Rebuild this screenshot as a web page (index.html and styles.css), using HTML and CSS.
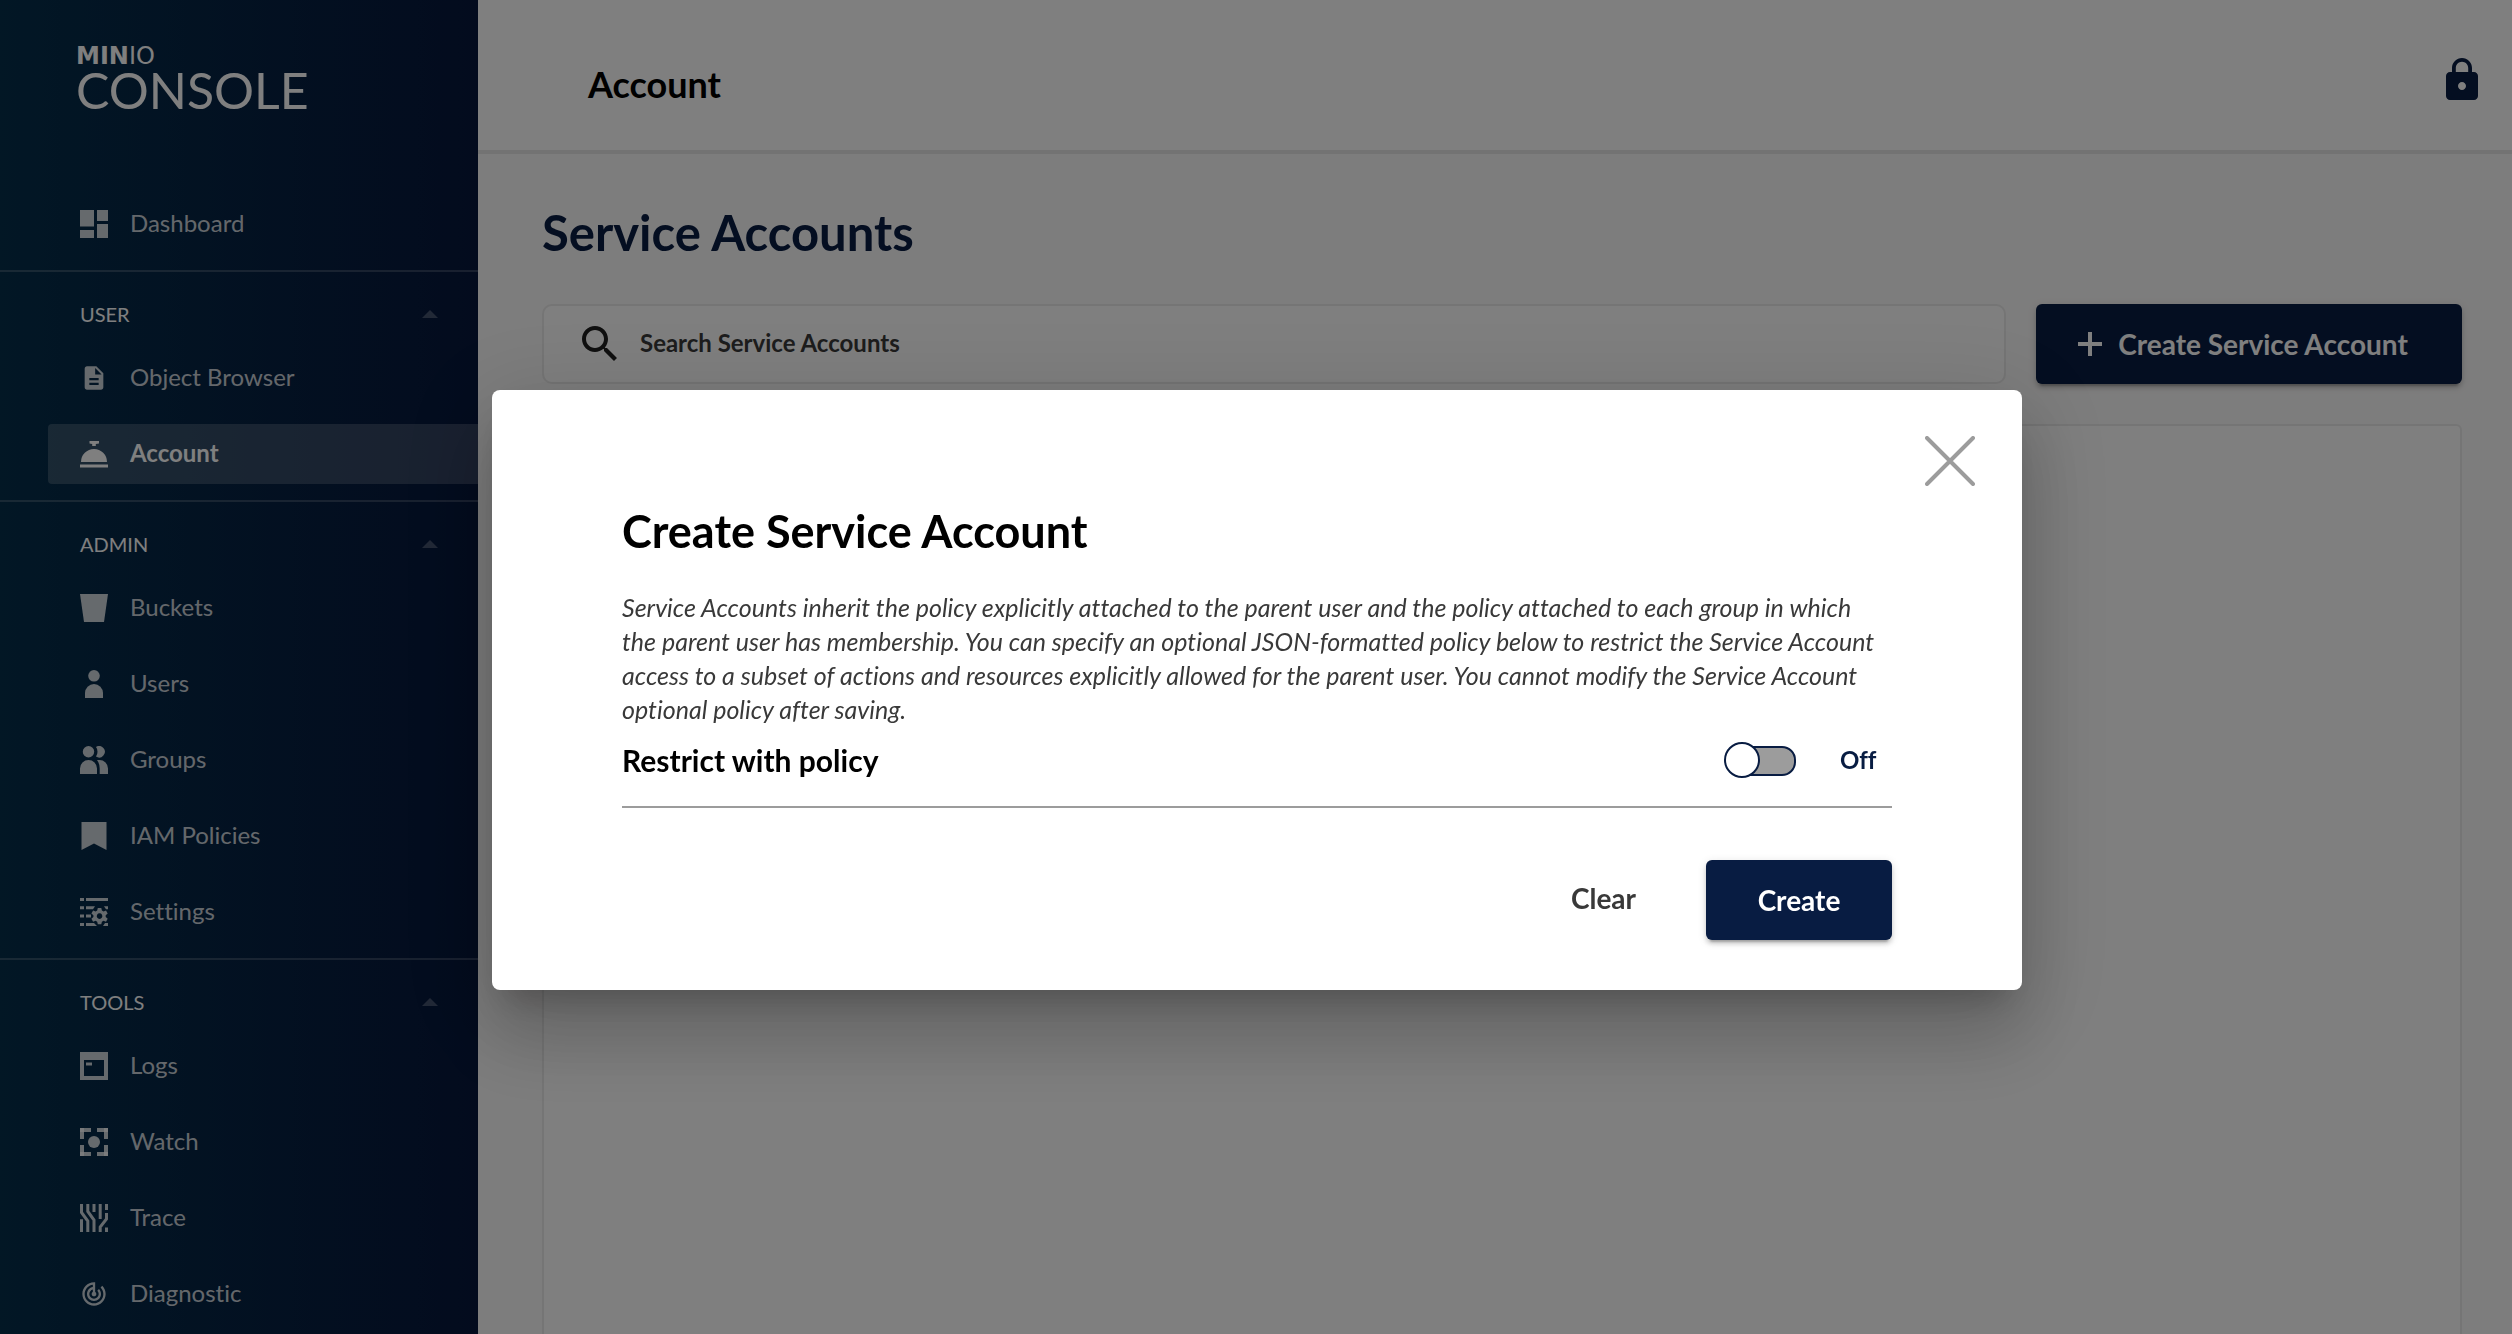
FILE: index.html
```html
<!DOCTYPE html>
<html lang="en">
<head>
<meta charset="utf-8">
<meta name="viewport" content="width=device-width, initial-scale=1">
<title>MinIO Console</title>
<link rel="stylesheet" href="styles.css">
</head>
<body>
<div class="app">
  <aside class="sidebar">
    <div class="logo">
      <span class="logo__brand"><b>MIN</b>IO</span>
      <span class="logo__product">CONSOLE</span>
    </div>
    <nav class="nav" aria-label="Main">
      <div class="nav__group nav__group--first">
        <a class="nav__item" href="#dashboard">
          <svg class="nav__icon" viewBox="0 0 28 28" aria-hidden="true"><path d="M0 0h14v16.500H0zM17 0h11v11H17zM0 20h14v8H0zM17 14h11v14H17z"/></svg>
          Dashboard
        </a>
      </div>
      <div class="nav__group">
        <button class="nav__heading" type="button" aria-expanded="true">USER<svg class="nav__caret" viewBox="0 0 16 8" aria-hidden="true"><path d="M0 8 8 0l8 8z"/></svg></button>
        <a class="nav__item" href="#object-browser">
          <svg class="nav__icon" viewBox="0 0 24 24" aria-hidden="true"><path d="M14 2H6c-1.100 0-1.990.9-1.990 2L4 20c0 1.100.89 2 1.990 2H18c1.100 0 2-.9 2-2V8l-6-6zm2 16H8v-2h8v2zm0-4H8v-2h8v2zm-3-5V3.500L18.500 9H13z"/></svg>
          Object Browser
        </a>
        <a class="nav__item nav__item--active" href="#account" aria-current="page">
          <svg class="nav__icon" viewBox="0 0 28 28" aria-hidden="true"><path d="M9.500 1h9.500v2.500L15.800 4v2h-3.600V4L9.500 3.500zM1 22a13 13 0 0 1 26 0zM0 24.500h28v3H0z"/></svg>
          Account
        </a>
      </div>
      <div class="nav__group">
        <button class="nav__heading" type="button" aria-expanded="true">ADMIN<svg class="nav__caret" viewBox="0 0 16 8" aria-hidden="true"><path d="M0 8 8 0l8 8z"/></svg></button>
        <a class="nav__item" href="#buckets">
          <svg class="nav__icon" viewBox="0 0 28 28" aria-hidden="true"><path d="M0 0h28l-4 28H4z"/></svg>
          Buckets
        </a>
        <a class="nav__item" href="#users">
          <svg class="nav__icon" viewBox="0 0 28 28" aria-hidden="true"><circle cx="14" cy="5.800" r="5.800"/><path d="M5 28v-5a9 9 0 0 1 18 0v5z"/></svg>
          Users
        </a>
        <a class="nav__item" href="#groups">
          <svg class="nav__icon" viewBox="0 0 28 28" aria-hidden="true"><circle cx="8.500" cy="5.800" r="5.700"/><path d="M0 28v-5.500a8.500 8.500 0 0 1 17 0V28zM16 1a5.700 5.700 0 1 1 0 9.600q1.500-1.800 1.500-4.800T16 1zM17 14h2.500a8.500 8.500 0 0 1 8.500 8.500V28h-8.300v-5.500q0-5-2.700-8.500z"/></svg>
          Groups
        </a>
        <a class="nav__item" href="#policies">
          <svg class="nav__icon" viewBox="0 0 28 28" aria-hidden="true"><path d="M1.500 0h25v28L14 21.500 1.500 28z"/></svg>
          IAM Policies
        </a>
        <a class="nav__item" href="#settings">
          <svg class="nav__icon" viewBox="0 0 28 28" aria-hidden="true"><path d="M0 0h4v3H0zM6 0h22v3H6zM0 8.200h4v3H0zM6 8.200h9l-2 3H6zM0 16.600h4v3H0zM6 16.600h5v3H6zM0 25h4v3H0zM6 25h8l3 3H6zM24 8.200h4v3h-2zM25 25h3v3h-5z"/><path fill-rule="evenodd" d="m17.800 10-.6 2.600-1.600.8-2.500-.9-1.700 3 2 1.800v1.600l-2 1.800 1.700 3 2.500-.9 1.600.9.600 2.600h3.500l.6-2.600 1.600-.9 2.500.9 1.700-3-2-1.800v-1.600l2-1.800-1.700-3-2.500.9-1.600-.8-.6-2.600zm1.700 5.300a2.800 2.800 0 1 0 .1 0z"/></svg>
          Settings
        </a>
      </div>
      <div class="nav__group">
        <button class="nav__heading" type="button" aria-expanded="true">TOOLS<svg class="nav__caret" viewBox="0 0 16 8" aria-hidden="true"><path d="M0 8 8 0l8 8z"/></svg></button>
        <a class="nav__item" href="#logs">
          <svg class="nav__icon" viewBox="0 0 28 28" aria-hidden="true"><path fill-rule="evenodd" d="M0 0h28v28H0zM4 8v16h20V8z"/><path d="M6 10.500h6v3H6z"/></svg>
          Logs
        </a>
        <a class="nav__item" href="#watch">
          <svg class="nav__icon" viewBox="0 0 28 28" aria-hidden="true"><path d="M0 0h11v4H0zM17 0h11v4H17zM0 24h11v4H0zM17 24h11v4H17z"/><path d="M0 0h4v11H0zM24 0h4v11h-4zM0 17h4v11H0zM24 17h4v11h-4z"/><circle cx="14" cy="14" r="6"/></svg>
          Watch
        </a>
        <a class="nav__item" href="#trace">
          <svg class="nav__icon" viewBox="0 0 28 28" aria-hidden="true"><path class="nav__stroke" d="M1.500 0v8.500L7.800 17v11M1.500 15.300V28M7.800 0v7.500L14 16v12M14 0v8M20.200 0v15M26.500 0v6M26.500 9v6l-6.300 8v5M26.500 23.500V28"/></svg>
          Trace
        </a>
        <a class="nav__item" href="#diagnostic">
          <svg class="nav__icon" viewBox="0 0 24 24" aria-hidden="true"><path d="M19.070 4.930l-1.410 1.410C19.100 7.790 20 9.790 20 12c0 4.420-3.580 8-8 8s-8-3.580-8-8c0-4.080 3.050-7.440 7-7.930v2.020C8.160 6.570 6 9.030 6 12c0 3.310 2.690 6 6 6s6-2.690 6-6c0-1.660-.67-3.160-1.760-4.240l-1.410 1.410C15.550 9.900 16 10.900 16 12c0 2.210-1.790 4-4 4s-4-1.790-4-4c0-1.860 1.280-3.410 3-3.860v2.140c-.6.35-1 .98-1 1.720 0 1.100.9 2 2 2s2-.9 2-2c0-.74-.4-1.380-1-1.720V2h-1C6.480 2 2 6.480 2 12s4.480 10 10 10 10-4.480 10-10c0-2.760-1.120-5.260-2.930-7.070z"/></svg>
          Diagnostic
        </a>
      </div>
    </nav>
  </aside>

  <main class="main">
    <header class="topbar">
      <h1 class="topbar__title">Account</h1>
      <button class="icon-button" type="button" aria-label="Change password">
        <svg class="icon-button__icon" viewBox="0 0 24 24" aria-hidden="true"><path d="M18 8h-1V6c0-2.760-2.240-5-5-5S7 3.240 7 6v2H6c-1.100 0-2 .9-2 2v10c0 1.100.9 2 2 2h12c1.100 0 2-.9 2-2V10c0-1.100-.9-2-2-2zm-6 9c-1.100 0-2-.9-2-2s.9-2 2-2 2 .9 2 2-.9 2-2 2zm3.100-9H8.900V6c0-1.710 1.390-3.100 3.100-3.100 1.710 0 3.100 1.390 3.100 3.100v2z"/></svg>
      </button>
    </header>
    <div class="content">
      <h2 class="content__title">Service Accounts</h2>
      <div class="toolbar">
        <label class="search">
          <svg class="search__icon" viewBox="0 0 24 24" aria-hidden="true"><path d="M15.500 14h-.79l-.28-.27C15.410 12.590 16 11.110 16 9.500 16 5.910 13.090 3 9.500 3S3 5.910 3 9.500 5.910 16 9.500 16c1.610 0 3.090-.59 4.230-1.570l.27.28v.79l5 4.990L20.490 19l-4.990-5zm-6 0C7.010 14 5 11.990 5 9.500S7.010 5 9.500 5 14 7.010 14 9.500 11.990 14 9.500 14z"/></svg>
          <input class="search__input" type="search" placeholder="Search Service Accounts" aria-label="Search Service Accounts">
        </label>
        <button class="button button--wide" type="button">
          <svg class="button__icon" viewBox="0 0 24 24" aria-hidden="true"><path d="M0 10h24v4H0zM10 0h4v24h-4z"/></svg>
          Create Service Account
        </button>
      </div>
      <div class="panel"></div>
    </div>
  </main>
</div>

<div class="backdrop">
  <section class="modal" role="dialog" aria-modal="true" aria-labelledby="modal-title">
    <div class="modal__bar">
      <button class="modal__close" type="button" aria-label="Close">
        <svg viewBox="0 0 50 50" aria-hidden="true"><path d="M2 2l46 46M48 2 2 48"/></svg>
      </button>
    </div>
    <form class="modal__body">
      <h2 class="modal__title" id="modal-title">Create Service Account</h2>
      <p class="modal__text">Service Accounts inherit the policy explicitly attached to the parent user and the policy attached to each group in which the parent user has membership. You can specify an optional JSON-formatted policy below to restrict the Service Account access to a subset of actions and resources explicitly allowed for the parent user. You cannot modify the Service Account optional policy after saving.</p>
      <div class="field">
        <label class="field__label" for="restrict">Restrict with policy</label>
        <input class="switch" type="checkbox" role="switch" id="restrict">
        <span class="field__state">Off</span>
      </div>
      <div class="actions">
        <button class="button button--text" type="reset">Clear</button>
        <button class="button" type="button">Create</button>
      </div>
    </form>
  </section>
</div>
</body>
</html>
```
FILE: styles.css
```css
*,
*::before,
*::after {
  box-sizing: border-box;
}

body {
  margin: 0;
  font-family: Lato, "Liberation Sans", sans-serif;
  font-size: 24px;
  font-variant-ligatures: none;
  color: #000;
  background: #fbfafa;
}

h1,
h2,
p {
  margin: 0;
}

button,
input {
  font: inherit;
}

button {
  border: 0;
  padding: 0;
  background: none;
  cursor: pointer;
}

svg {
  display: block;
}

.app {
  display: flex;
  height: 100vh;
  overflow: hidden;
}

/* Sidebar */

.sidebar {
  flex: 0 0 478px;
  overflow: hidden;
  color: #fff;
  background: linear-gradient(90deg, #052e4b 0%, #06173c 100%);
}

.logo {
  display: flex;
  flex-direction: column;
  height: 194px;
  padding: 44px 0 0 76px;
}

.logo__brand {
  font-family: "DejaVu Sans", sans-serif;
  font-size: 24px;
  line-height: 24px;
}

.logo__brand b {
  font-weight: 700;
}

.logo__product {
  font-size: 50px;
  line-height: 44px;
}

.nav__group {
  display: flex;
  flex-direction: column;
  gap: 16px;
  padding-bottom: 16px;
  border-top: 2px solid rgba(255, 255, 255, 0.18);
}

.nav__group--first {
  border-top: 0;
}

.nav__heading {
  display: flex;
  align-items: center;
  justify-content: space-between;
  height: 60px;
  padding: 24px 40px 0 80px;
  font-size: 20px;
  line-height: 34px;
  color: #fff;
}

.nav__caret {
  width: 16px;
  height: 8px;
  fill: rgba(255, 255, 255, 0.25);
}

.nav__item {
  display: flex;
  gap: 22px;
  height: 60px;
  margin-left: 48px;
  padding-left: 32px;
  border-radius: 4px 0 0 4px;
  line-height: 57px;
  color: rgba(255, 255, 255, 0.8);
  text-decoration: none;
}

.nav__item--active {
  color: #fff;
  font-weight: 700;
  background: rgba(255, 255, 255, 0.18);
}

.nav__icon {
  width: 28px;
  height: 28px;
  margin-top: 16px;
  fill: currentColor;
}

.nav__stroke {
  fill: none;
  stroke: currentColor;
  stroke-width: 3;
}

/* Main column */

.main {
  display: flex;
  flex: 1;
  flex-direction: column;
  min-width: 0;
}

.topbar {
  display: flex;
  flex-shrink: 0;
  align-items: center;
  justify-content: space-between;
  height: 154px;
  padding: 10px 26px 0 110px;
  border-bottom: 4px solid #e6e6e6;
  background: #fff;
}

.topbar__title {
  padding-top: 8px;
  font-size: 36px;
  line-height: 44px;
  font-weight: 700;
}

.icon-button__icon {
  width: 48px;
  height: 48px;
  fill: #081c42;
}

.content {
  padding: 49px 50px 50px 64px;
}

.content__title {
  margin-bottom: 43px;
  font-size: 49px;
  line-height: 58px;
  font-weight: 700;
  color: #081c42;
}

.toolbar {
  display: flex;
  gap: 30px;
  margin-bottom: 40px;
}

.search {
  display: flex;
  flex: 1;
  align-items: center;
  gap: 16px;
  height: 80px;
  padding: 0 32px;
  border: 2px solid #eaeaea;
  border-radius: 10px;
  background: #fff;
}

.search__icon {
  width: 48px;
  height: 48px;
  fill: #202020;
}

.search__input {
  flex: 1;
  min-width: 0;
  padding: 0 0 3px;
  border: 0;
  outline: 0;
  font-weight: 700;
  background: transparent;
}

.search__input::placeholder {
  color: #393939;
  opacity: 1;
}

.panel {
  min-height: 1000px;
  border: 2px solid #eaeaea;
  border-radius: 6px;
  background: #fff;
}

.button {
  display: flex;
  align-items: center;
  justify-content: center;
  gap: 16px;
  height: 80px;
  min-width: 186px;
  padding-bottom: 1px;
  border-radius: 6px;
  font-size: 28px;
  font-weight: 700;
  color: #fff;
  background: #081c42;
  box-shadow: 0 6px 2px -4px rgba(0, 0, 0, 0.2), 0 4px 4px rgba(0, 0, 0, 0.14), 0 2px 10px rgba(0, 0, 0, 0.12);
}

.button--wide {
  min-width: 426px;
  padding-right: 12px;
}

.button--text {
  min-width: 0;
  padding: 0 20px 4px;
  color: #393939;
  background: none;
  box-shadow: none;
}

.button__icon {
  width: 24px;
  height: 24px;
  fill: currentColor;
}

/* Dialog */

.backdrop {
  position: fixed;
  inset: 0;
  display: flex;
  align-items: center;
  justify-content: center;
  padding: 46px 30px 0 32px;
  background: rgba(0, 0, 0, 0.5);
}

.modal {
  width: 100%;
  max-width: 1530px;
  border-radius: 8px;
  background: #fff;
  box-shadow: 0 22px 30px -14px rgba(0, 0, 0, 0.2), 0 48px 76px 6px rgba(0, 0, 0, 0.14), 0 18px 92px 16px rgba(0, 0, 0, 0.12);
}

.modal__bar {
  display: flex;
  justify-content: flex-end;
  padding: 46px 47px 0;
}

.modal__close svg {
  width: 50px;
  height: 50px;
  fill: none;
  stroke: #9c9c9c;
  stroke-width: 4;
  stroke-linecap: round;
}

.modal__body {
  padding: 19px 130px 50px;
}

.modal__title {
  margin-bottom: 33px;
  font-size: 45px;
  line-height: 52px;
  font-weight: 700;
}

.modal__text {
  padding-right: 8px;
  font-size: 25px;
  line-height: 34px;
  font-style: italic;
  color: #393939;
}

.field {
  display: flex;
  align-items: center;
  gap: 44px;
  padding: 16px 0 28px;
  border-bottom: 2px solid #9c9c9c;
}

.field__label {
  flex: 1;
  font-size: 30px;
  line-height: 36px;
  font-weight: 700;
}

.field__state {
  width: 52px;
  line-height: 36px;
  font-weight: 700;
  color: #081c42;
}

.switch {
  position: relative;
  width: 72px;
  height: 36px;
  margin: 0;
  appearance: none;
  cursor: pointer;
}

.switch::before,
.switch::after {
  content: "";
  position: absolute;
  border: 2px solid #081c42;
}

.switch::before {
  inset: 4px 0 2px 8px;
  border-radius: 14px;
  background: #9c9c9c;
}

.switch::after {
  top: 0;
  left: 0;
  width: 36px;
  height: 36px;
  border-radius: 50%;
  background: #fff;
}

.switch:checked::after {
  left: 36px;
}

.actions {
  display: flex;
  justify-content: flex-end;
  gap: 50px;
  margin-top: 52px;
}
```
